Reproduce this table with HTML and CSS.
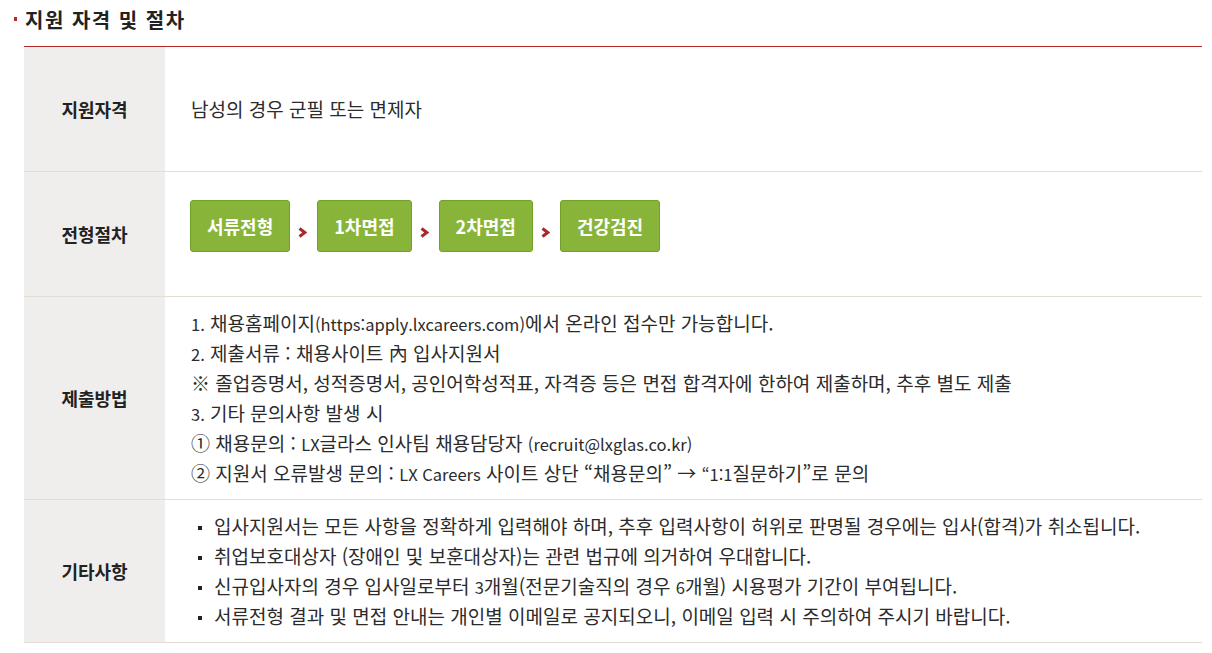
FILE: index.html
```html
<!DOCTYPE html>
<html lang="ko">
<head>
<meta charset="utf-8">
<link rel="stylesheet" href="styles.css">
</head>
<body>
<section class="section">
  <h2 class="title"><span class="title-mark"></span>지원 자격 및 절차</h2>
  <table class="info">
    <tr class="row-short">
      <th>지원자격</th>
      <td>남성의 경우 군필 또는 면제자</td>
    </tr>
    <tr class="row-short">
      <th>전형절차</th>
      <td>
        <div class="steps">
          <span class="step">서류전형</span>
          <svg class="arrow" width="9" height="11" viewBox="0 0 9 11"><path d="M1.5 1.5 L6.8 5.5 L1.5 9.5" fill="none" stroke="#a82a2a" stroke-width="3"/></svg>
          <span class="step">1차면접</span>
          <svg class="arrow" width="9" height="11" viewBox="0 0 9 11"><path d="M1.5 1.5 L6.8 5.5 L1.5 9.5" fill="none" stroke="#a82a2a" stroke-width="3"/></svg>
          <span class="step">2차면접</span>
          <svg class="arrow" width="9" height="11" viewBox="0 0 9 11"><path d="M1.5 1.5 L6.8 5.5 L1.5 9.5" fill="none" stroke="#a82a2a" stroke-width="3"/></svg>
          <span class="step">건강검진</span>
        </div>
      </td>
    </tr>
    <tr>
      <th>제출방법</th>
      <td>
        <p class="line"><span class="en">1.</span> 채용홈페이지<span class="en">(https:apply.lxcareers.com)</span>에서 온라인 접수만 가능합니다.</p>
        <p class="line"><span class="en">2.</span> 제출서류 : 채용사이트 內 입사지원서</p>
        <p class="line">※ 졸업증명서, 성적증명서, 공인어학성적표, 자격증 등은 면접 합격자에 한하여 제출하며, 추후 별도 제출</p>
        <p class="line"><span class="en">3.</span> 기타 문의사항 발생 시</p>
        <p class="line">① 채용문의 : <span class="en">LX</span>글라스 인사팀 채용담당자 <span class="en">(recruit@lxglas.co.kr)</span></p>
        <p class="line">② 지원서 오류발생 문의 : <span class="en">LX Careers</span> 사이트 상단 “채용문의” → <span class="en">“1:1</span>질문하기”로 문의</p>
      </td>
    </tr>
    <tr>
      <th>기타사항</th>
      <td>
        <ul class="bullets">
          <li>입사지원서는 모든 사항을 정확하게 입력해야 하며, 추후 입력사항이 허위로 판명될 경우에는 입사(합격)가 취소됩니다.</li>
          <li>취업보호대상자 (장애인 및 보훈대상자)는 관련 법규에 의거하여 우대합니다.</li>
          <li>신규입사자의 경우 입사일로부터 <span class="en">3</span>개월(전문기술직의 경우 <span class="en">6</span>개월) 시용평가 기간이 부여됩니다.</li>
          <li>서류전형 결과 및 면접 안내는 개인별 이메일로 공지되오니, 이메일 입력 시 주의하여 주시기 바랍니다.</li>
        </ul>
      </td>
    </tr>
  </table>
</section>
</body>
</html>
```

FILE: styles.css
```css
* { box-sizing: border-box; }
html, body { margin: 0; padding: 0; background: #fff; }
body {
  font-family: "Noto Sans CJK KR", "Noto Sans", sans-serif;
  color: #2b2b2b;
  font-size: 19px;
}
.en { font-size: 16.5px; line-height: 1; }
.section {
  padding: 7px 10px 0 14px;
}
.title {
  display: flex;
  align-items: center;
  gap: 8px;
  margin: 0;
  height: 26px;
  font-size: 20px;
  font-weight: 700;
  letter-spacing: 1.5px;
  color: #222;
  line-height: 26px;
}
.title-mark {
  width: 3px;
  height: 4px;
  background: #b52a2a;
  margin-top: -2px;
}
.info {
  margin: 13px 0 0 10px;
  width: 1178px;
  border-collapse: collapse;
  border-top: 1px solid #b52a2a;
}
.info tr { border-bottom: 1px solid #e1ded6; }
.info th {
  width: 141px;
  background: #efeeec;
  font-weight: 700;
  color: #222;
  font-size: 18px;
  text-align: center;
  vertical-align: middle;
  padding: 0;
}
.info td {
  padding: 11px 26px;
  vertical-align: middle;
  line-height: 30px;
}
.row-short th, .row-short td { height: 125px; }
.line { margin: 0; height: 30px; white-space: nowrap; }
.steps {
  display: flex;
  align-items: center;
  margin: 0 0 16px -1px;
}
.step {
  display: inline-flex;
  align-items: center;
  justify-content: center;
  height: 52px;
  padding: 0 16px;
  background: #88b539;
  border: 1px solid #71a02b;
  border-radius: 3px;
  color: #fff;
  font-weight: 700;
  font-size: 18px;
}
.arrow {
  margin: 13px 10px 0 8px;
}
.bullets {
  list-style: none;
  margin: 0;
  padding: 0;
}
.bullets li {
  height: 30px;
  white-space: nowrap;
}
.bullets li::before {
  content: "";
  display: inline-block;
  width: 4px;
  height: 4px;
  background: #222;
  margin: 0 12px 0 7px;
  vertical-align: middle;
  position: relative;
  top: -1px;
}
```
